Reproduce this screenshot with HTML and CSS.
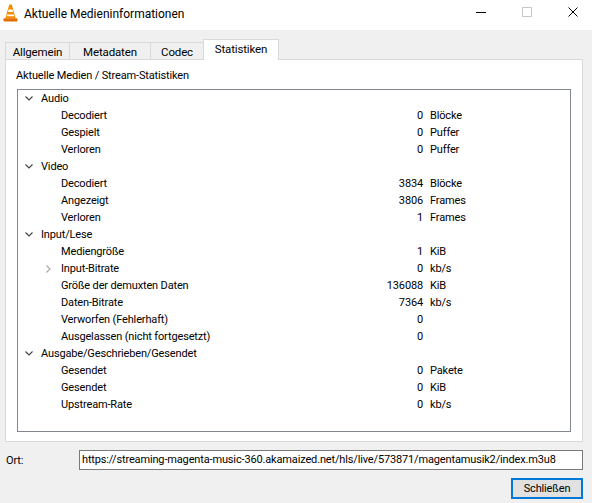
FILE: index.html
```html
<!DOCTYPE html>
<html lang="de">
<head>
<meta charset="utf-8">
<title>Aktuelle Medieninformationen</title>
<link rel="stylesheet" href="styles.css">
</head>
<body>
<div class="window">
  <div class="titlebar">
    <svg class="appicon" width="15" height="18" viewBox="0 0 15 18">
      <path d="M0.5 15.2 Q0.5 14.3 1.6 14.3 L13.4 14.3 Q14.5 14.3 14.5 15.2 L14.5 16.4 Q14.5 17.4 13.4 17.4 L1.6 17.4 Q0.5 17.4 0.5 16.4 Z" fill="#e26d00"/>
      <path d="M6.3 0.6 L8.7 0.6 L12.6 14.3 L2.4 14.3 Z" fill="#f28c00"/>
      <path d="M5.6 5.6 L9.4 5.6 L10.1 8.0 L4.9 8.0 Z" fill="#ffffff"/>
      <path d="M4.2 10.4 L10.8 10.4 L11.3 12.2 L3.7 12.2 Z" fill="#ffffff"/>
    </svg>
    <span class="title">Aktuelle Medieninformationen</span>
    <div class="caption">
      <div class="capbtn"><span class="min"></span></div>
      <div class="capbtn"><span class="max"></span></div>
      <div class="capbtn close">
        <svg width="10" height="10" viewBox="0 0 10 10"><path d="M0.5 0.5 L9.5 9.5 M9.5 0.5 L0.5 9.5" stroke="#000" stroke-width="1"/></svg>
      </div>
    </div>
  </div>

  <div class="body">
    <div class="tabs">
      <div class="tab t1">Allgemein</div>
      <div class="tab t2">Metadaten</div>
      <div class="tab t3">Codec</div>
      <div class="tab t4 active">Statistiken</div>
    </div>
    <div class="pane">
      <div class="heading">Aktuelle Medien / Stream-Statistiken</div>
      <div class="tree">
        <div class="row top"><span class="chev"><svg width="8" height="5" viewBox="0 0 8 5"><path d="M0.5 0.5 L4 4 L7.5 0.5" fill="none" stroke="#404040" stroke-width="1.1"/></svg></span><span class="name">Audio</span><span class="num"></span><span class="unit"></span></div>
        <div class="row child"><span class="name">Decodiert</span><span class="num">0</span><span class="unit">Blöcke</span></div>
        <div class="row child"><span class="name">Gespielt</span><span class="num">0</span><span class="unit">Puffer</span></div>
        <div class="row child"><span class="name">Verloren</span><span class="num">0</span><span class="unit">Puffer</span></div>

        <div class="row top"><span class="chev"><svg width="8" height="5" viewBox="0 0 8 5"><path d="M0.5 0.5 L4 4 L7.5 0.5" fill="none" stroke="#404040" stroke-width="1.1"/></svg></span><span class="name">Video</span><span class="num"></span><span class="unit"></span></div>
        <div class="row child"><span class="name">Decodiert</span><span class="num">3834</span><span class="unit">Blöcke</span></div>
        <div class="row child"><span class="name">Angezeigt</span><span class="num">3806</span><span class="unit">Frames</span></div>
        <div class="row child"><span class="name">Verloren</span><span class="num">1</span><span class="unit">Frames</span></div>

        <div class="row top"><span class="chev"><svg width="8" height="5" viewBox="0 0 8 5"><path d="M0.5 0.5 L4 4 L7.5 0.5" fill="none" stroke="#404040" stroke-width="1.1"/></svg></span><span class="name">Input/Lese</span><span class="num"></span><span class="unit"></span></div>
        <div class="row child"><span class="name">Mediengröße</span><span class="num">1</span><span class="unit">KiB</span></div>
        <div class="row child expandable"><span class="chev2"><svg width="5" height="8" viewBox="0 0 5 8"><path d="M0.5 0.5 L4 4 L0.5 7.5" fill="none" stroke="#a6a6a6" stroke-width="1.1"/></svg></span><span class="name">Input-Bitrate</span><span class="num">0</span><span class="unit">kb/s</span></div>
        <div class="row child"><span class="name">Größe der demuxten Daten</span><span class="num">136088</span><span class="unit">KiB</span></div>
        <div class="row child"><span class="name">Daten-Bitrate</span><span class="num">7364</span><span class="unit">kb/s</span></div>
        <div class="row child"><span class="name">Verworfen (Fehlerhaft)</span><span class="num">0</span><span class="unit"></span></div>
        <div class="row child"><span class="name">Ausgelassen (nicht fortgesetzt)</span><span class="num">0</span><span class="unit"></span></div>

        <div class="row top"><span class="chev"><svg width="8" height="5" viewBox="0 0 8 5"><path d="M0.5 0.5 L4 4 L7.5 0.5" fill="none" stroke="#404040" stroke-width="1.1"/></svg></span><span class="name">Ausgabe/Geschrieben/Gesendet</span><span class="num"></span><span class="unit"></span></div>
        <div class="row child"><span class="name">Gesendet</span><span class="num">0</span><span class="unit">Pakete</span></div>
        <div class="row child"><span class="name">Gesendet</span><span class="num">0</span><span class="unit">KiB</span></div>
        <div class="row child"><span class="name">Upstream-Rate</span><span class="num">0</span><span class="unit">kb/s</span></div>
      </div>
    </div>

    <div class="ortrow">
      <span class="ortlabel">Ort:</span>
      <div class="ortinput">https://streaming-magenta-music-360.akamaized.net/hls/live/573871/magentamusik2/index.m3u8</div>
    </div>
    <div class="btnrow">
      <div class="button">Schließen</div>
    </div>
  </div>
</div>
</body>
</html>
```
FILE: styles.css
```css
html, body {
  margin: 0;
  padding: 0;
}
body {
  width: 592px;
  height: 503px;
  overflow: hidden;
  background: #f0f0f0;
  font-family: "Segoe UI", Roboto, "Noto Sans", sans-serif;
  font-size: 11px;
  letter-spacing: -0.15px;
  color: #000;
}
.window {
  width: 592px;
  height: 503px;
  display: flex;
  flex-direction: column;
}
.titlebar {
  height: 30px;
  background: #fff;
  display: flex;
  align-items: center;
  flex: none;
}
.appicon {
  margin-left: 3px;
  margin-top: -4px;
  flex: none;
}
.title {
  margin-left: 6px;
  margin-top: -3px;
  font-size: 12px;
  letter-spacing: 0;
}
.caption {
  margin-left: auto;
  display: flex;
  height: 30px;
  margin-top: -6px;
}
.capbtn {
  width: 46px;
  height: 30px;
  display: flex;
  align-items: center;
  justify-content: center;
}
.capbtn.close {
  width: 42px;
  justify-content: flex-start;
  padding-left: 18px;
  box-sizing: border-box;
}
.min {
  width: 10px;
  height: 1px;
  background: #000;
}
.max {
  width: 8px;
  height: 8px;
  border: 1px solid #c8c8c8;
}
.body {
  flex: 1;
  display: flex;
  flex-direction: column;
  padding: 9px 9px 0 5px;
}
.tabs {
  display: flex;
  align-items: flex-end;
  height: 21px;
  margin-bottom: -1px;
}
.tab {
  height: 18px;
  box-sizing: border-box;
  border: 1px solid #d9d9d9;
  border-bottom: none;
  background: #f0f0f0;
  display: flex;
  align-items: center;
  justify-content: center;
  padding-top: 1px;
  margin-left: -1px;
  font-size: 11.5px;
}
.tab.t1 { width: 65px; margin-left: 0; }
.tab.t2 { width: 82px; }
.tab.t3 { width: 54px; }
.tab.t4 { width: 76px; }
.tab.active {
  height: 21px;
  background: #fff;
  position: relative;
  z-index: 1;
  padding-top: 0;
  padding-bottom: 3px;
}
.pane {
  height: 383px;
  box-sizing: border-box;
  border: 1px solid #d9d9d9;
  background: #fff;
  padding: 8px 0 0 10px;
}
.heading {
  line-height: 16px;
  height: 16px;
}
.tree {
  margin-top: 5px;
  margin-left: 1px;
  width: 554px;
  height: 343px;
  box-sizing: border-box;
  border: 1px solid #828790;
  padding-top: 0;
}
.row {
  display: grid;
  grid-template-columns: 340px 65px 1fr;
  height: 17px;
  line-height: 17px;
  white-space: nowrap;
}
.row .name {
  grid-column: 1;
  grid-row: 1;
}
.row .num {
  grid-column: 2;
  grid-row: 1;
  text-align: right;
}
.row .unit {
  grid-column: 3;
  grid-row: 1;
  padding-left: 7px;
}
.row.top .name {
  padding-left: 23px;
}
.row.child .name {
  padding-left: 43px;
}
.chev {
  grid-column: 1;
  grid-row: 1;
  padding-left: 7px;
  display: flex;
  align-items: center;
  margin-top: -1px;
}
.chev2 {
  grid-column: 1;
  grid-row: 1;
  padding-left: 28px;
  display: flex;
  align-items: center;
}
.ortrow {
  display: flex;
  align-items: center;
  margin-top: 8px;
  height: 20px;
}
.ortlabel {
  width: 73px;
  padding-left: 1px;
  flex: none;
}
.ortinput {
  width: 505px;
  height: 20px;
  box-sizing: border-box;
  border: 1px solid #7a7a7a;
  background: #fff;
  padding-left: 2px;
  line-height: 18px;
  white-space: nowrap;
  overflow: hidden;
}
.btnrow {
  display: flex;
  justify-content: flex-end;
  margin-top: 8px;
}
.button {
  width: 72px;
  height: 21px;
  box-sizing: border-box;
  border: 1px solid #0078d7;
  box-shadow: inset 0 0 0 1px #0078d7;
  background: #e1e1e1;
  display: flex;
  align-items: center;
  justify-content: center;
}
```
